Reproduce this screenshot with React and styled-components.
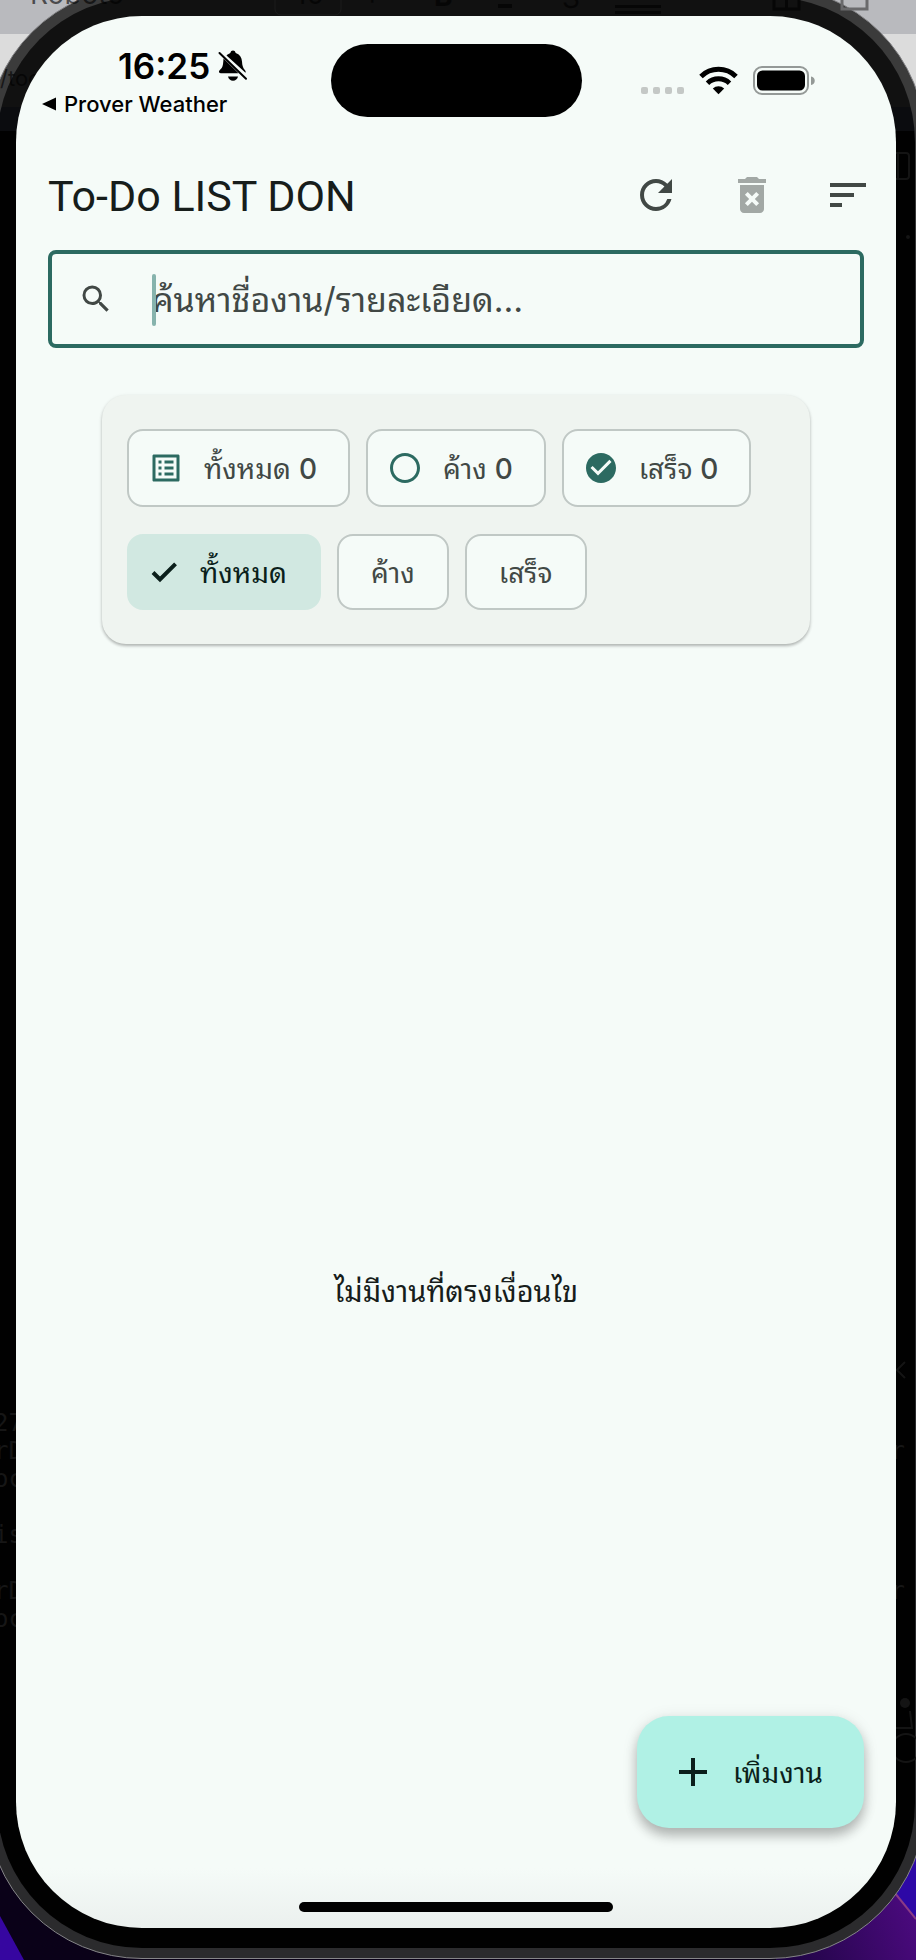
import React from "react";
import styled, { createGlobalStyle, css } from "styled-components";
import {
  MdAdd,
  MdCheck,
  MdCheckCircle,
  MdDeleteForever,
  MdListAlt,
  MdRadioButtonUnchecked,
  MdRefresh,
  MdSearch,
  MdSort,
} from "react-icons/md";

const color = {
  surface: "#f5fbf8",
  card: "#eff4f0",
  primary: "#2c6a61",
  text: "#171d1b",
  muted: "#414845",
  outline: "#c0c8c5",
  selected: "#d1e8e1",
  onSelected: "#0b1f1b",
  fab: "#b0f1e5",
};

const GlobalStyle = createGlobalStyle`
  *, *::before, *::after { box-sizing: border-box; }
  body { margin: 0; background: #000; }
  button, input { font: inherit; color: inherit; }
  svg { display: block; flex: none; }
`;

const Stage = styled.div`
  position: relative;
  isolation: isolate;
  display: flex;
  min-height: 100vh;
  overflow: hidden;
  font-family: Inter, "Noto Sans Thai Looped", "Noto Sans Thai", "Noto Sans", sans-serif;
  color: ${color.text};
  background: linear-gradient(#b9babe 0 34px, #dcdcdc 34px 107px, #0a0118 107px);
`;

const Wallpaper = styled.svg`
  position: absolute;
  z-index: -1;
  bottom: 0;
  ${(p) => (p.$right ? "right: 0;" : "left: 0;")}
`;

const Frame = styled.div`
  flex: 1;
  display: flex;
  min-width: 0;
  margin: -14px -10px 1px -14px;
  padding: 10px;
  border: 1px solid #858588;
  border-radius: 156px;
  background: linear-gradient(#3b3b3b 0 200px, #2b2b2d 400px);
`;

const Bezel = styled.div`
  flex: 1;
  display: flex;
  min-width: 0;
  padding: 19px 19px 20px;
  border-radius: 145px;
  background: linear-gradient(#111 0 110px, #0b0c0f 110px 134px, #010101 134px);
`;

const Screen = styled.main`
  position: relative;
  z-index: 1;
  flex: 1;
  display: flex;
  flex-direction: column;
  min-width: 0;
  border-radius: 126px;
  background: linear-gradient(to top, #ebf0ee, ${color.surface} 60px);
`;

const GhostToolbar = styled.div`
  position: absolute;
  top: 0;
  left: 32px;
  right: 40px;
  height: 16px;
  overflow: hidden;
  color: rgba(0, 0, 0, 0.6);
`;

const GhostCode = styled.pre`
  position: absolute;
  top: 1409px;
  left: ${(p) => (p.$right ? "auto" : "-6px")};
  right: ${(p) => (p.$right ? "11px" : "auto")};
  margin: 0;
  font: 24px/28px "DejaVu Sans Mono", monospace;
  color: #161616;
`;

const GhostPath = styled.div`
  position: absolute;
  top: 64px;
  left: 0;
  font-size: 22px;
  line-height: 28px;
  color: rgba(0, 0, 0, 0.6);
`;

const GhostMarks = styled.svg`
  position: absolute;
  top: 140px;
  right: 0;
`;

const StatusBar = styled.header`
  display: grid;
  grid-template-columns: 1fr 251px 1fr;
  height: 131px;
  padding-top: 28px;
  color: #000;
`;

const StatusLeft = styled.div`
  padding-left: 26px;
`;

const Clock = styled.div`
  display: flex;
  align-items: center;
  gap: 8px;
  padding-left: 76px;
  font-size: 35px;
  line-height: 44px;
  font-weight: 600;
`;

const BackLink = styled.a`
  display: flex;
  align-items: center;
  gap: 8px;
  font-size: 22px;
  line-height: 32px;
  font-weight: 500;
  color: inherit;
  text-decoration: none;
  white-space: nowrap;
`;

const Island = styled.div`
  height: 73px;
  border-radius: 37px;
  background: #000;
`;

const StatusRight = styled.div`
  display: flex;
  justify-content: flex-end;
  padding: 22px 80px 0 0;
`;

const AppBar = styled.div`
  display: flex;
  align-items: center;
  justify-content: space-between;
  height: 96px;
  padding-left: 32px;
`;

const Title = styled.h1`
  margin: 0;
  padding-top: 2px;
  font-family: Roboto, sans-serif;
  font-size: 43px;
  line-height: 56px;
  font-weight: 400;
  white-space: nowrap;
`;

const Actions = styled.div`
  display: flex;
`;

const IconButton = styled.button`
  display: grid;
  place-items: center;
  width: 96px;
  height: 96px;
  padding: 0;
  border: 0;
  background: none;
  color: ${color.muted};
  &:disabled { color: #a2a8a5; }
`;

const SearchBox = styled.label`
  position: relative;
  display: flex;
  align-items: center;
  gap: 38px;
  height: 98px;
  margin: 7px 32px 0;
  padding: 0 26px;
  border: 4px solid ${color.primary};
  border-radius: 8px;
  color: ${color.muted};
`;

const SearchInput = styled.input`
  flex: 1;
  min-width: 0;
  height: 60px;
  padding: 0;
  border: 0;
  outline: 0;
  background: none;
  font-size: 34px;
  &::placeholder { color: ${color.muted}; opacity: 1; }
`;

const Caret = styled.span`
  position: absolute;
  left: 100px;
  top: 20px;
  width: 4px;
  height: 52px;
  border-radius: 2px;
  background: #86b3ad;
`;

const Card = styled.section`
  display: flex;
  flex-direction: column;
  gap: 27px;
  margin: 47px 86px 10px;
  padding: 34px 25px;
  border-radius: 24px;
  background: ${color.card};
  box-shadow: 0 2px 3px rgba(0, 0, 0, 0.24), 0 1px 4px rgba(0, 0, 0, 0.08);
`;

const ChipRow = styled.div`
  display: flex;
  flex-wrap: wrap;
  gap: 16px;
`;

const chip = css`
  display: flex;
  align-items: center;
  gap: 20px;
  border: 2px solid ${color.outline};
  border-radius: 16px;
  background: ${color.surface};
  color: ${color.muted};
  white-space: nowrap;
`;

const Label = styled.span`
  padding-top: 2px;
  font-size: 28px;
  line-height: 40px;
`;

const StatChip = styled.div`
  ${chip}
  height: 78px;
  padding: 0 31px 0 19px;
  svg { color: ${color.primary}; }
`;

const Count = styled.span`
  font-weight: 500;
`;

const FilterChip = styled.button`
  ${chip}
  height: 76px;
  padding: 0 32px;
  ${(p) =>
    p.$selected &&
    css`
      padding-left: 19px;
      border-color: ${color.selected};
      background: ${color.selected};
      color: ${color.onSelected};
      path:last-child { stroke: currentColor; stroke-width: 1; }
    `}
`;

const Empty = styled.p`
  flex: 1;
  display: flex;
  align-items: center;
  justify-content: center;
  margin: 0;
  padding-top: 2px;
  font-size: 29px;
  line-height: 40px;
`;

const Fab = styled.button`
  position: absolute;
  right: 32px;
  bottom: 100px;
  display: flex;
  align-items: center;
  gap: 16px;
  height: 112px;
  padding: 0 41px 0 32px;
  border: 0;
  border-radius: 32px;
  background: ${color.fab};
  color: ${color.onSelected};
  box-shadow: 0 8px 12px rgba(0, 0, 0, 0.24), 0 2px 16px rgba(0, 0, 0, 0.1);
`;

const HomeIndicator = styled.div`
  position: absolute;
  left: 50%;
  bottom: 16px;
  width: 314px;
  height: 10px;
  margin-left: -157px;
  border-radius: 5px;
  background: #000;
`;

const BellOff = () => (
  <svg width="30" height="32" viewBox="0 0 30 32" aria-label="Silent">
    <path d="M8.500 5.500C10 4.200 11.300 3.400 12.300 3c.4-1.700 1.400-2.500 2.700-2.500s2.300.8 2.700 2.500c4 1.300 6.100 4.500 6.300 8.500.2 4 .9 6.200 2.600 8.200.9 1 1.400 2 .9 3z" />
    <path d="M5.500 8.600 20.500 23.300H3C1 23.300.4 21.700 1.400 20.600l2.300-2.600c1.400-1.800 1.500-5.200 1.800-9.400z" />
    <path d="M10 26.500h10c-.5 2.600-2.500 4.200-5 4.200s-4.500-1.600-5-4.200z" />
    <path d="M1.500 3 28 28.800" fill="none" stroke="#000" strokeWidth="2" strokeLinecap="round" />
  </svg>
);

const StatusIcons = () => (
  <svg width="176" height="30" viewBox="0 0 176 30" aria-label="Wi-Fi, battery full">
    <g fill="#c4c8c6">
      {[1, 13, 25, 37].map((x) => (
        <rect key={x} x={x} y="21" width="7" height="7" rx="2" />
      ))}
    </g>
    <g fill="none" stroke="#000" strokeWidth="5">
      <path d="M61 10.500a25 25 0 0 1 35 0" />
      <path d="M67.500 17.200a16 16 0 0 1 22 0" />
    </g>
    <path d="M72.800 22.500a8.500 8.500 0 0 1 11.400 0l-5.700 5.700z" />
    <rect x="114" y="1" width="54" height="27" rx="8" fill="none" stroke="#949997" strokeWidth="2" />
    <rect x="117" y="4.500" width="48" height="20" rx="5.500" />
    <path d="M171 10.500c5 1 5 7.500 0 8.500z" fill="#949997" />
  </svg>
);

export default function App() {
  return (
    <Stage>
      <GlobalStyle />
      <Wallpaper width="120" height="120" viewBox="0 0 120 120" aria-hidden="true">
        <path d="M0 76v44h24z" fill="#3606a0" />
      </Wallpaper>
      <Wallpaper $right width="140" height="140" viewBox="0 0 140 140" aria-hidden="true">
        <defs>
          <linearGradient id="violet" x1="0" y1="1" x2="1" y2="0.6">
            <stop offset="0" stopColor="#1c0440" />
            <stop offset="1" stopColor="#4c0a80" />
          </linearGradient>
        </defs>
        <path d="M0 0h140v140H0z" fill="url(#violet)" />
        <path d="M110 0h30v98L110 62z" fill="#2d08a6" />
        <path d="M110 62 140 99" fill="none" stroke="#8a3a86" strokeWidth="2" />
      </Wallpaper>
      <Frame>
        <Bezel>
          <Screen>
            <StatusBar>
              <StatusLeft>
                <Clock>
                  16:25
                  <BellOff />
                </Clock>
                <BackLink href="#weather">
                  <svg width="14" height="14" viewBox="0 0 14 14" aria-hidden="true">
                    <path d="M0 7 14 .5v13z" />
                  </svg>
                  Prover Weather
                </BackLink>
              </StatusLeft>
              <Island />
              <StatusRight>
                <StatusIcons />
              </StatusRight>
            </StatusBar>

            <AppBar>
              <Title>To-Do LIST DON</Title>
              <Actions>
                <IconButton aria-label="Refresh">
                  <MdRefresh size={48} />
                </IconButton>
                <IconButton aria-label="Delete completed" disabled>
                  <MdDeleteForever size={48} />
                </IconButton>
                <IconButton aria-label="Sort">
                  <MdSort size={48} />
                </IconButton>
              </Actions>
            </AppBar>

            <SearchBox>
              <MdSearch size={36} />
              <SearchInput type="text" aria-label="ค้นหา" placeholder="ค้นหาชื่องาน/รายละเอียด…" />
              <Caret />
            </SearchBox>

            <Card>
              <ChipRow>
                <StatChip>
                  <MdListAlt size={36} />
                  <Label>ทั้งหมด <Count>0</Count></Label>
                </StatChip>
                <StatChip>
                  <MdRadioButtonUnchecked size={36} />
                  <Label>ค้าง <Count>0</Count></Label>
                </StatChip>
                <StatChip>
                  <MdCheckCircle size={36} />
                  <Label>เสร็จ <Count>0</Count></Label>
                </StatChip>
              </ChipRow>
              <ChipRow>
                <FilterChip $selected aria-pressed="true">
                  <MdCheck size={32} />
                  <Label>ทั้งหมด</Label>
                </FilterChip>
                <FilterChip aria-pressed="false">
                  <Label>ค้าง</Label>
                </FilterChip>
                <FilterChip aria-pressed="false">
                  <Label>เสร็จ</Label>
                </FilterChip>
              </ChipRow>
            </Card>

            <Empty>ไม่มีงานที่ตรงเงื่อนไข</Empty>

            <Fab>
              <MdAdd size={48} />
              <Label>เพิ่มงาน</Label>
            </Fab>
            <HomeIndicator />
          </Screen>
        </Bezel>
      </Frame>

      <GhostToolbar aria-hidden="true">
        <svg width="844" height="16" viewBox="0 0 844 16" fontFamily="Inter" fontSize="28" fill="currentColor">
          <text x="-2" y="4">Roboto</text>
          <rect x="243" y="-20" width="66" height="35" rx="6" fill="none" stroke="#1c1c1c" />
          <text x="263" y="4">10</text>
          <text x="331" y="4">+</text>
          <text x="402" y="6" fontWeight="700">B</text>
          <path d="M466 4h14v4h-14zM583 5h46v3h-46zM583 11h46v3h-46z" />
          <text x="530" y="8">S</text>
          <path d="M742-8h25v17h-25zM754.500-8v17" fill="none" stroke="currentColor" strokeWidth="3" />
          <path d="M810-8h25v17h-25z" fill="none" stroke="#6a6a6c" strokeWidth="3" />
        </svg>
      </GhostToolbar>
      <GhostPath aria-hidden="true">/toc</GhostPath>
      <GhostCode aria-hidden="true">{"27\nrD\noc\n\nis\n\nrD\noc"}</GhostCode>
      <GhostCode aria-hidden="true" $right>{"\nr\n\n\n\n\nr"}</GhostCode>
      <GhostMarks width="20" height="1640" viewBox="0 0 20 1640" fill="none" stroke="#141414" strokeWidth="2" aria-hidden="true">
        <rect x="-14" y="13" width="27" height="26" rx="3" />
        <path d="M2 13v26M9 1222l-8 8 8 8M14 1571l2 17H0" />
        <circle cx="9" cy="1563" r="5" fill="#141414" stroke="none" />
        <circle cx="10" cy="1608" r="14" />
        <circle cx="12" cy="97" r="2" fill="#141414" stroke="none" />
      </GhostMarks>
    </Stage>
  );
}
